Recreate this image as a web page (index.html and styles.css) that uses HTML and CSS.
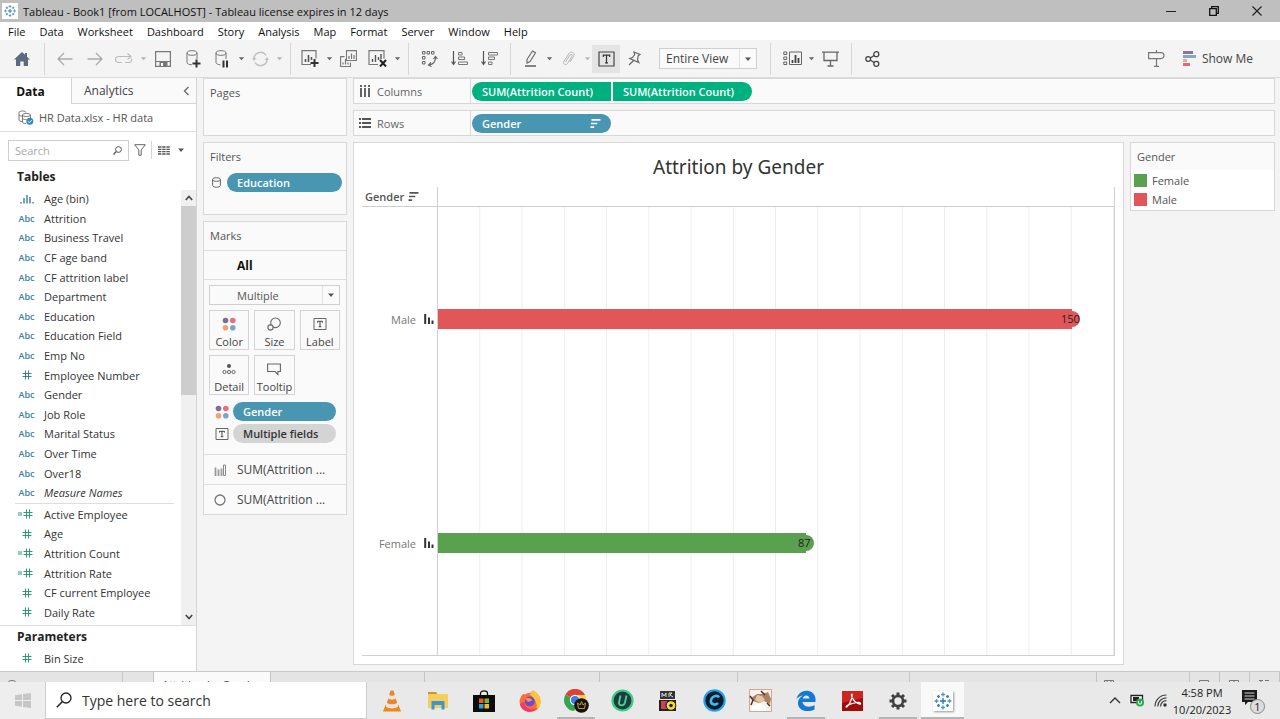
FILE: index.html
```html
<!DOCTYPE html>
<html lang="en">
<head>
<meta charset="utf-8">
<title>Tableau - Book1</title>
<link rel="stylesheet" href="styles.css">
</head>
<body>
<svg class="defs" aria-hidden="true">
  <defs>
    <symbol id="caret" viewBox="0 0 8 8"><path d="M1 2.500h6L4 6z" fill="currentColor"/></symbol>
    <symbol id="bins" viewBox="0 0 14 10"><path d="M1 8v1.500M4 4v5.500M7 1v8.500M10 3v6.500M13 8v1.500" stroke="#3b7f9f" stroke-width="1.400" fill="none"/></symbol>
    <symbol id="hash" viewBox="0 0 10 10"><path d="M3.500 .5v9M6.500 .5v9M.5 3.500h9M.5 6.500h9" stroke="#2f9a77" fill="none"/></symbol>
    <symbol id="calc" viewBox="0 0 15 10"><path d="M8.500 .5v9M11.500 .5v9M5.500 3.500h9M5.500 6.500h9M0 4h4M0 6h4" stroke="#2f9a77" fill="none"/></symbol>
    <symbol id="dots" viewBox="0 0 14 14"><circle cx="3.500" cy="3.500" r="2.800" fill="#7d6c99"/><circle cx="10.800" cy="3.500" r="2.800" fill="#ee6a7c"/><circle cx="3.500" cy="10.700" r="2.800" fill="#f2a177"/><circle cx="10.800" cy="10.700" r="2.800" fill="#7ba3c7"/></symbol>
    <symbol id="label-t" viewBox="0 0 14 14"><path d="M1 1.500h12v11H1z" fill="none" stroke="#666"/><path d="M4.500 5.500V4.300h5v1.200M7 4.300v5.400M5.700 9.700h2.600" fill="none" stroke="#444"/></symbol>
    <symbol id="sort" viewBox="0 0 12 10"><path d="M1.500 1h10M1 5h7M.5 9h4" stroke="currentColor" stroke-width="1.800" fill="none"/></symbol>
    <symbol id="marks" viewBox="0 0 10 11"><path d="M1.200 0v10M5 3.500V10M8.500 6.500V10" stroke="#333" stroke-width="2" fill="none"/></symbol>
    <symbol id="spark" viewBox="0 0 20 20"><g stroke-width="1.300" fill="none"><path d="M10 7v6M7 10h6" stroke="#2b6ea6"/><path d="M10 1.500v4M8 3.500h4M10 14.500v4M8 16.500h4M1.500 10h4M3.500 8v4M14.500 10h4M16.500 8v4" stroke="#4f94cb"/><path d="M5.500 4v3M4 5.500h3M14.500 4v3M13 5.500h3M5.500 13v3M4 14.500h3M14.500 13v3M13 14.500h3" stroke="#3b82bd"/></g></symbol>
  </defs>
</svg>

<header class="titlebar">
  <span class="app-icon"><svg width="14" height="14"><use href="#spark"/></svg></span>
  <h1 class="titlebar-text">Tableau - Book1 [from LOCALHOST] - Tableau license expires in 12 days</h1>
  <div class="window-controls">
    <button aria-label="Minimize"><svg width="10" height="10"><path d="M0 5.500h10" stroke="#222" fill="none"/></svg></button>
    <button aria-label="Restore"><svg width="10" height="10"><path d="M.7 2.700h6.600v6.600H.7zM2.700 2.700v-2h6.600v6.600h-2" stroke="#111" stroke-width="1.300" fill="none"/></svg></button>
    <button aria-label="Close"><svg width="10" height="10"><path d="M.5.5l9 9M9.500.5l-9 9" stroke="#222" stroke-width="1.200" fill="none"/></svg></button>
  </div>
</header>

<nav class="menubar">
  <button>File</button><button>Data</button><button>Worksheet</button><button>Dashboard</button><button>Story</button><button>Analysis</button><button>Map</button><button>Format</button><button>Server</button><button>Window</button><button>Help</button>
</nav>

<div class="toolbar">
  <div class="tool-group group-home">
    <button class="tool wide" aria-label="Start page"><svg width="16" height="14" viewBox="0 0 16 14"><path d="M8 0L0 7.500h2V14h4.300V9.500h3.400V14H14V7.500h2L13 4.700V1h-2v1.800z" fill="#5b6b80"/></svg></button>
  </div>
  <div class="tool-group">
    <button class="tool wide" aria-label="Undo"><svg width="16" height="14" viewBox="0 0 16 14"><path d="M15.500 7H1M7 1L1 7l6 6" stroke="#a9a9a9" stroke-width="1.300" fill="none"/></svg></button>
    <button class="tool wide" aria-label="Redo"><svg width="16" height="14" viewBox="0 0 16 14"><path d="M.5 7H15M9 1l6 6-6 6" stroke="#a9a9a9" stroke-width="1.300" fill="none"/></svg></button>
    <button class="tool" aria-label="Replay"><svg width="18" height="12" viewBox="0 0 18 12"><path d="M7 9.500H3.500a3 3 0 010-6h12M12.500.5l3.500 3-3.500 3M10 9.500h4.500a3 3 0 002-4" stroke="#bdbdbd" stroke-width="1.200" fill="none"/></svg></button>
    <button class="tool-caret faded" aria-label="Replay options"><svg width="7" height="7"><use href="#caret"/></svg></button>
    <button class="tool wide" aria-label="Save"><svg width="16" height="16" viewBox="0 0 16 16"><path d="M.6.6h14.800v14.800H.6zM1 10.500h14" stroke="#777" stroke-width="1.200" fill="none"/><path d="M4.500 10.500h8V15h-8z" fill="#777"/><path d="M6 12h2v3H6z" fill="#fff"/></svg></button>
    <button class="tool wide" aria-label="New data source"><svg width="15" height="18" viewBox="0 0 15 18"><ellipse cx="6" cy="3" rx="5" ry="2.300" stroke="#777" fill="none"/><path d="M1 3v9.500c0 1.300 2.300 2.300 5 2.300M11 3v6" stroke="#777" fill="none"/><path d="M10.500 9.500v8M6.500 13.500h8" stroke="#333" stroke-width="2" fill="none"/></svg></button>
    <button class="tool" aria-label="Pause updates"><svg width="14" height="18" viewBox="0 0 14 18"><ellipse cx="6" cy="3" rx="5" ry="2.300" stroke="#777" fill="none"/><path d="M1 3v9.500c0 1.300 2.300 2.300 4.500 2.300M11 3v6" stroke="#777" fill="none"/><path d="M8.500 10.500v7M12 10.500v7" stroke="#333" stroke-width="2" fill="none"/></svg></button>
    <button class="tool-caret" aria-label="Update options"><svg width="7" height="7"><use href="#caret"/></svg></button>
    <button class="tool" aria-label="Run update"><svg width="17" height="16" viewBox="0 0 17 16"><path d="M2 8.500a6.500 6.500 0 0112-4M15 7.500a6.500 6.500 0 01-12 4" stroke="#c0c0c0" stroke-width="1.400" fill="none"/><path d="M0 7h4.500L2 10zM12.500 9H17l-2-3z" fill="#c0c0c0"/></svg></button>
    <button class="tool-caret faded" aria-label="Run options"><svg width="7" height="7"><use href="#caret"/></svg></button>
  </div>
  <div class="tool-group">
    <button class="tool" aria-label="New worksheet"><svg width="18" height="17" viewBox="0 0 18 17"><path d="M10 14.500H1V.6h14v8" stroke="#777" stroke-width="1.200" fill="none"/><path d="M4.500 12V9M7.500 12V5M10.500 10V7" stroke="#555" stroke-width="1.600" fill="none"/><path d="M13.500 9v8M9.500 13h8" stroke="#333" stroke-width="2" fill="none"/></svg></button>
    <button class="tool-caret" aria-label="New options"><svg width="7" height="7"><use href="#caret"/></svg></button>
    <button class="tool" aria-label="Duplicate"><svg width="17" height="17" viewBox="0 0 17 17"><path d="M6.500.6h9.900v9.900H6.500zM4.500 6.600H.6v9.900h9.900v-4" stroke="#777" stroke-width="1.100" fill="none"/><path d="M9 9V6M11.500 9V3.500M14 9V5M3 14.500v-2M5.500 14.500V9M8 14.500v-2" stroke="#777" stroke-width="1.200" fill="none"/></svg></button>
    <button class="tool wide" aria-label="Clear sheet"><svg width="19" height="17" viewBox="0 0 19 17"><path d="M10 14.500H1V.6h15v8" stroke="#777" stroke-width="1.200" fill="none"/><path d="M4.500 12V9M7.500 12V5M10.500 10V7M13 9V4" stroke="#555" stroke-width="1.400" fill="none"/><path d="M12 10l6 6.500M18 10l-6 6.500" stroke="#222" stroke-width="2" fill="none"/></svg></button>
    <button class="tool-caret" aria-label="Clear options"><svg width="7" height="7"><use href="#caret"/></svg></button>
  </div>
  <div class="tool-group">
    <button class="tool wide" aria-label="Swap rows and columns"><svg width="17" height="17" viewBox="0 0 17 17"><path d="M1.500 1.500h2.500v2.500H1.500zM6 1.500h2.500v2.500H6zM10.500 1.500H13v2.500h-2.500zM1.500 6.500h2.500V9H1.500zM1.500 11.500h2.500V14H1.500z" stroke="#666" fill="none"/><path d="M14.500 7.500c0 4-2 6.500-6 7.500M12.500 9l2-2.500 2 2.500M10 12.500L7.500 15l3 1.500" stroke="#666" stroke-width="1.200" fill="none"/></svg></button>
    <button class="tool wide" aria-label="Sort ascending"><svg width="17" height="15" viewBox="0 0 17 15"><path d="M2.500 0v13M.5 10.500l2 3 2-3" stroke="#555" stroke-width="1.200" fill="none"/><path d="M7.500 1.500h3.500V4H7.500zM7.500 6h6v2.500h-6zM7.500 11h9v2.500h-9z" stroke="#777" fill="none"/></svg></button>
    <button class="tool wide" aria-label="Sort descending"><svg width="17" height="15" viewBox="0 0 17 15"><path d="M2.500 0v13M.5 10.500l2 3 2-3" stroke="#555" stroke-width="1.200" fill="none"/><path d="M7.500 1.500h9V4h-9zM7.500 6h6v2.500h-6zM7.500 11h3.500v2.500H7.500z" stroke="#777" fill="none"/></svg></button>
  </div>
  <div class="tool-group group-format">
    <button class="tool" aria-label="Highlight"><svg width="13" height="17" viewBox="0 0 13 17"><path d="M3 9.500L8.500 1l3 1.800L6 11.500 3 13z" stroke="#666" stroke-width="1.100" fill="none"/><path d="M1 16h11" stroke="#777" stroke-width="1.800"/></svg></button>
    <button class="tool-caret" aria-label="Highlight options"><svg width="7" height="7"><use href="#caret"/></svg></button>
    <button class="tool" aria-label="Group members"><svg width="13" height="16" viewBox="0 0 13 16"><path d="M3.500 11L8 4c1-1.500 3-.5 2 1.200L5.500 12.500c-1.500 2.300-5 .5-3.700-2L7 2.500C9-.5 13.500 2 11.700 5L8 11" stroke="#b5b5b5" fill="none"/></svg></button>
    <button class="tool-caret faded" aria-label="Group options"><svg width="7" height="7"><use href="#caret"/></svg></button>
    <button class="tool pressed" aria-label="Show mark labels" aria-pressed="true"><svg width="17" height="16" viewBox="0 0 17 16"><path d="M1 1h15v14H1z" stroke="#444" stroke-width="1.200" fill="none"/><path d="M5.300 6V4.200h6.400V6M8.500 4.200v7.600M7 11.800h3" stroke="#333" stroke-width="1.200" fill="none"/></svg></button>
    <button class="tool" aria-label="Fix axes"><svg width="13" height="15" viewBox="0 0 13 15"><path d="M6 1l6 2.500-1.800 1.300-.7 4 1.300 2.700-9-4 2.700-1 2.200-3zM5.500 9.500L1 14" stroke="#666" stroke-width="1.200" fill="none"/></svg></button>
    <div class="select-wrap view-select">
      <select aria-label="Fit"><option>Entire View</option></select>
      <svg class="select-arrow" width="8" height="8"><use href="#caret"/></svg>
    </div>
  </div>
  <div class="tool-group group-cards">
    <button class="tool" aria-label="Show or hide cards"><svg width="19" height="15" viewBox="0 0 19 15"><path d="M6.500 1h12v12.500h-12zM.8 1h3v2.500h-3zM.8 6h3v2.500h-3zM.8 11h3v2.500h-3z" stroke="#666" fill="none"/><path d="M9.500 12V9M12.500 12V4M15.500 12V7" stroke="#444" stroke-width="1.800" fill="none"/></svg></button>
    <button class="tool-caret" aria-label="Card options"><svg width="7" height="7"><use href="#caret"/></svg></button>
    <button class="tool" aria-label="Presentation mode"><svg width="17" height="16" viewBox="0 0 17 16"><path d="M0 1.200h17M2 1.200v8.300h13V1.200M8.500 9.500V15M5.500 15h6" stroke="#666" stroke-width="1.300" fill="none"/></svg></button>
  </div>
  <button class="tool wide share" aria-label="Share"><svg width="15" height="16" viewBox="0 0 15 16"><g stroke="#444" stroke-width="1.300" fill="none"><circle cx="3.200" cy="8" r="2.400"/><circle cx="11.300" cy="3.200" r="2.500"/><circle cx="11.300" cy="12.800" r="2.500"/><path d="M5.300 7L9 4.500M5.300 9L9 11.500"/></g></svg></button>
  <div class="toolbar-end">
    <button class="tool" aria-label="Guide"><svg width="17" height="17" viewBox="0 0 17 17"><path d="M.6 2.600h12.400c4 0 4 6 0 6H.6zM8.500 0v2.600M8.500 8.600V16M6 16.300h5" stroke="#777" stroke-width="1.200" fill="none"/></svg></button>
    <button class="show-me"><svg width="13" height="15" viewBox="0 0 13 15"><path d="M0 0h10v3H0z" fill="#8b7497"/><path d="M0 4h13v3H0z" fill="#85a7c9"/><path d="M0 8h4v3H0z" fill="#f2a988"/><path d="M0 12h7v3H0z" fill="#ea6576"/></svg>Show Me</button>
  </div>
</div>

<main class="workspace">
  <aside class="sidebar">
    <div class="side-tabs">
      <button class="side-tab active">Data</button>
      <button class="side-tab">Analytics</button>
      <button class="collapse" aria-label="Collapse pane"><svg width="6" height="10"><path d="M5.500 1L1.500 5l4 4" stroke="#666" stroke-width="1.300" fill="none"/></svg></button>
    </div>
    <div class="source">
      <svg width="16" height="15" viewBox="0 0 16 15"><path d="M1 2.500C1 .5 8 .5 8 2.500M1 2.500v7.500c0 1 1.500 1.500 3 1.500M1 5c1 1 2 1 3 1M4.500 5c0-2 8-2 8 0s-8 2-8 0v7c0 1 1.500 1.500 3.500 1.500M12.500 5v3M4.500 8.500c1 1 3 1 4 1" stroke="#777" fill="none"/><circle cx="11.800" cy="11.300" r="3.500" fill="#3a86b4"/><path d="M10 11.300l1.300 1.400 2.300-2.500" stroke="#fff" fill="none"/></svg>
      <span>HR Data.xlsx - HR data</span>
    </div>
    <div class="search-row">
      <label class="search-box">
        <input type="text" placeholder="Search" aria-label="Search fields">
        <svg width="9" height="9"><circle cx="5.500" cy="3.500" r="2.900" stroke="#555" fill="none"/><path d="M3.300 5.500L.5 8.500" stroke="#555" stroke-width="1.300"/></svg>
      </label>
      <button class="filter-button" aria-label="Filter"><svg width="12" height="12"><path d="M.7.7h10.600L7.200 6v5.200H4.800V6z" stroke="#666" fill="none"/></svg></button>
      <button class="view-button" aria-label="View options"><svg width="12" height="9"><path d="M0 1h12M0 3.300h12M0 5.600h12M0 8h12" stroke="#555" stroke-width="1.300" stroke-dasharray="3.400 .8"/></svg><svg width="8" height="8"><use href="#caret"/></svg></button>
    </div>
    <h2 class="side-heading">Tables</h2>
    <div class="field-area">
      <ul class="fields">
        <li><svg class="type" width="14" height="10"><use href="#bins"/></svg>Age (bin)</li>
        <li><span class="type abc">Abc</span>Attrition</li>
        <li><span class="type abc">Abc</span>Business Travel</li>
        <li><span class="type abc">Abc</span>CF age band</li>
        <li><span class="type abc">Abc</span>CF attrition label</li>
        <li><span class="type abc">Abc</span>Department</li>
        <li><span class="type abc">Abc</span>Education</li>
        <li><span class="type abc">Abc</span>Education Field</li>
        <li><span class="type abc">Abc</span>Emp No</li>
        <li><svg class="type" width="10" height="10" viewBox="0 0 10 10"><path d="M3.500 .5v9M6.500 .5v9M.5 3.500h9M.5 6.500h9" stroke="#3b7f9f" fill="none"/></svg>Employee Number</li>
        <li><span class="type abc">Abc</span>Gender</li>
        <li><span class="type abc">Abc</span>Job Role</li>
        <li><span class="type abc">Abc</span>Marital Status</li>
        <li><span class="type abc">Abc</span>Over Time</li>
        <li><span class="type abc">Abc</span>Over18</li>
        <li><span class="type abc">Abc</span><em>Measure Names</em></li>
        <li class="divider"></li>
        <li><svg class="type calc" width="15" height="10"><use href="#calc"/></svg>Active Employee</li>
        <li><svg class="type" width="10" height="10"><use href="#hash"/></svg>Age</li>
        <li><svg class="type calc" width="15" height="10"><use href="#calc"/></svg>Attrition Count</li>
        <li><svg class="type calc" width="15" height="10"><use href="#calc"/></svg>Attrition Rate</li>
        <li><svg class="type" width="10" height="10"><use href="#hash"/></svg>CF current Employee</li>
        <li><svg class="type" width="10" height="10"><use href="#hash"/></svg>Daily Rate</li>
      </ul>
      <div class="scrollbar">
        <button aria-label="Scroll up"><svg width="8" height="6"><path d="M.8 5L4 1.500 7.200 5" stroke="#444" stroke-width="1.600" fill="none"/></svg></button>
        <div class="scroll-track"><div class="scroll-thumb"></div></div>
        <button aria-label="Scroll down"><svg width="8" height="6"><path d="M.8 1L4 4.500 7.200 1" stroke="#444" stroke-width="1.600" fill="none"/></svg></button>
      </div>
    </div>
    <div class="parameters">
      <h2 class="side-heading">Parameters</h2>
      <ul class="fields"><li><svg class="type" width="10" height="10"><use href="#hash"/></svg>Bin Size</li></ul>
    </div>
  </aside>

  <section class="cards">
    <div class="card pages"><h3>Pages</h3></div>
    <div class="card filters">
      <h3>Filters</h3>
      <div class="pill-row"><svg width="9" height="11"><path d="M.6 2.500v6c0 2.300 7.800 2.300 7.800 0v-6c0-2.400-7.800-2.400-7.800 0s7.800 2.400 7.800 0" stroke="#666" fill="none"/></svg><button class="pill blue-pill">Education</button></div>
    </div>
    <div class="card marks-card">
      <h3>Marks</h3>
      <button class="marks-all">All</button>
      <div class="marks-body">
        <div class="select-wrap mark-type">
          <select aria-label="Mark type"><option>Multiple</option></select>
          <svg class="select-arrow" width="8" height="8"><use href="#caret"/></svg>
        </div>
        <div class="mark-buttons">
          <button><svg width="14" height="14"><use href="#dots"/></svg>Color</button>
          <button><svg width="14" height="14"><circle cx="8.500" cy="5.800" r="4.800" stroke="#666" stroke-width="1.100" fill="none"/><circle cx="3.500" cy="10.500" r="2.600" stroke="#666" stroke-width="1.100" fill="#fafafa"/></svg>Size</button>
          <button><svg width="14" height="14"><use href="#label-t"/></svg>Label</button>
          <button><svg width="14" height="14"><circle cx="7" cy="4" r="2" fill="#555"/><g stroke="#666" fill="none"><circle cx="2.500" cy="10" r="1.600"/><circle cx="7" cy="10" r="1.600"/><circle cx="11.500" cy="10" r="1.600"/></g></svg>Detail</button>
          <button><svg width="14" height="14"><path d="M.6 2h12.800v7.500h-2.500v3L8 9.500H.6z" stroke="#666" stroke-width="1.100" fill="none"/></svg>Tooltip</button>
        </div>
        <div class="mark-pill"><svg width="14" height="14"><use href="#dots"/></svg><button class="pill blue-pill">Gender</button></div>
        <div class="mark-pill"><svg width="14" height="14"><use href="#label-t"/></svg><button class="pill gray-pill">Multiple fields</button></div>
      </div>
      <button class="marks-sum"><svg width="12" height="12"><path d="M1.500 3.500V12M4.500 5.500V12M7.500 4.500V12" stroke="#999" stroke-width="1.800"/><path d="M9.500 1h2v10.500h-2z" stroke="#888" fill="none"/></svg>SUM(Attrition ...</button>
      <button class="marks-sum"><svg width="12" height="12"><circle cx="6" cy="6" r="5" stroke="#777" stroke-width="1.300" fill="none"/></svg>SUM(Attrition ...</button>
    </div>
  </section>

  <section class="content">
    <div class="shelf">
      <div class="shelf-name"><svg width="12" height="12"><path d="M2 0v2M6 0v2M10 0v2M2 3v9M6 3v9M10 3v9" stroke="#555" stroke-width="1.800"/></svg>Columns</div>
      <button class="pill green-pill pill-left">SUM(Attrition Count)</button><button class="pill green-pill pill-right">SUM(Attrition Count)</button>
    </div>
    <div class="shelf">
      <div class="shelf-name"><svg width="12" height="12"><path d="M0 2h2M0 6h2M0 10h2M3 2h9M3 6h9M3 10h9" stroke="#555" stroke-width="1.800"/></svg>Rows</div>
      <button class="pill blue-pill pill-sorted">Gender<svg width="11" height="9"><use href="#sort"/></svg></button>
    </div>
    <div class="view-row">
      <div class="view">
        <h2 class="view-title">Attrition by Gender</h2>
        <div class="chart">
          <div class="chart-corner">Gender<svg width="11" height="9"><use href="#sort"/></svg></div>
          <div class="chart-top"></div>
          <div class="row-label">Male<svg width="10" height="11"><use href="#marks"/></svg></div>
          <div class="plot"><div class="bar red" style="width:93.75%"><span class="bar-value">150</span></div></div>
          <div class="row-label">Female<svg width="10" height="11"><use href="#marks"/></svg></div>
          <div class="plot"><div class="bar green" style="width:54.375%"><span class="bar-value">87</span></div></div>
        </div>
      </div>
      <div class="legend">
        <h3>Gender</h3>
        <ul><li><span class="swatch green"></span>Female</li><li><span class="swatch red"></span>Male</li></ul>
      </div>
    </div>
  </section>
</main>

<div class="sheet-tabs">
  <button class="sheet data-source" aria-label="Data source"><svg width="8" height="10"><path d="M.5 3v5c0 2 7 2 7 0V3c0-2-7-2-7 0" stroke="#777" fill="none"/></svg></button>
  <button class="sheet narrow" aria-label="Previous sheets"></button>
  <button class="sheet current">Attrition by Gender</button>
  <button class="sheet s1" aria-label="Sheet 2"></button><button class="sheet s2" aria-label="Sheet 3"></button><button class="sheet s3" aria-label="Sheet 4"></button><button class="sheet s4" aria-label="Sheet 5"></button>
  <div class="sheet-tools">
    <button aria-label="New sheet"><svg width="10" height="10"><path d="M.5 1.500h9v8h-9zM3 1.500v8M7 1.500v8" stroke="#777" fill="none"/></svg></button>
    <button aria-label="Sheet sorter"><svg width="10" height="10"><path d="M.5 1.500h9v8h-9z" stroke="#777" fill="none"/></svg></button>
    <button aria-label="Filmstrip"><svg width="10" height="10"><path d="M.5 1.500h9v8h-9zM5 1.500v8" stroke="#777" fill="none"/></svg></button>
    <button aria-label="Tabs"><svg width="10" height="10"><path d="M0 1.500h4M6 1.500h4M2 1.500v8" stroke="#777" fill="none"/></svg></button>
  </div>
</div>

<footer class="taskbar">
  <button class="start" aria-label="Start"><svg width="16" height="15" viewBox="0 0 16 15"><path d="M0 2.200L7 1.200V7H0zM8 1l8-1v7H8zM0 8h7v5.800l-7-1zM8 8h8v7l-8-1z" fill="#c6c6c6"/></svg></button>
  <label class="task-search">
    <svg width="16" height="16"><circle cx="10" cy="6" r="5" stroke="#222" stroke-width="1.300" fill="none"/><path d="M6.500 9.500L.8 15.200" stroke="#222" stroke-width="1.500"/></svg>
    <input type="text" placeholder="Type here to search" aria-label="Type here to search">
  </label>
  <div class="apps">
    <button aria-label="VLC"><svg width="20" height="22" viewBox="0 0 20 22"><path d="M3.500 15h13l2.500 6.500H1z" fill="#ef8712"/><path d="M8.500.5h3l4.700 16c-2.500 2.500-9.900 2.500-12.400 0z" fill="#e4e4e4"/><path d="M8.500.5h3l1.300 4.500c-1.500 1-4.100 1-5.600 0zM6.200 8.500c2 1.500 5.600 1.500 7.600 0l1.300 4.500c-3 1.800-7.200 1.800-10.200 0z" fill="#e9862a"/></svg></button>
    <button aria-label="File Explorer"><svg width="20" height="19" viewBox="0 0 20 19"><path d="M0 1h8l2 2h10v14H0z" fill="#f7ce5b"/><path d="M0 1h8l1 2H0z" fill="#c89527"/><path d="M3.500 10h13v8.500h-3V14h-7v4.500h-3z" fill="#3c96d3"/></svg></button>
    <button aria-label="Microsoft Store"><svg width="22" height="22" viewBox="0 0 22 22"><path d="M0 5h22v17H0z" fill="#0b0b0b"/><path d="M7.500 7V3.500C7.500 0 14.500 0 14.500 3.500V7" stroke="#111" stroke-width="1.300" fill="none"/><path d="M6 8.500h4.500V13H6z" fill="#f15a24"/><path d="M11.500 8.500H16V13h-4.500z" fill="#7cb829"/><path d="M6 14h4.500v4.500H6z" fill="#28a5e0"/><path d="M11.500 14H16v4.500h-4.500z" fill="#fbbc1a"/></svg></button>
    <button aria-label="Firefox"><svg width="22" height="22" viewBox="0 0 22 22"><path d="M4 4l2 .5C7 3.500 9 2.800 11 3l3-2.500C19 3 21.500 7 21.500 12a10.500 10 0 01-21 0C.5 9 2 6 4 4z" fill="#ff6b35"/><path d="M14 .5c5 2.500 7.500 6 7.500 11.500 0 3-1.500 6-4 8 1.500-6-2-13-7-15.500z" fill="#ffc53a"/><path d="M1 14c1 5 5 7.800 10 7.800 3 0 6-1.300 8-3.800-6 3-13 1-14-6z" fill="#f23a66"/><circle cx="10.800" cy="11.500" r="5" fill="#6b4bd6"/><path d="M6 8.500c4-1.500 7 0 7 2l-4 1.500z" fill="#ff9640"/></svg></button>
    <button class="running" aria-label="Chrome"><svg width="25" height="24" viewBox="0 0 25 24"><path d="M11 11L1.500 5.500A11 11 0 0121 6z" fill="#df4137"/><path d="M11 11l-9.500-5.500A11 11 0 0010 22l4-7z" fill="#35a453"/><path d="M11 6h10a11 11 0 01-10 16l5-9z" fill="#f9cf3d"/><circle cx="11" cy="11" r="5.200" fill="#fff"/><circle cx="11" cy="11" r="4.100" fill="#3e7de6"/><circle cx="17.500" cy="16.500" r="7.300" fill="#15130c"/><path d="M14.500 19.500l-1-5.500 2.500 2 1.500-3.500L19 16l2.500-2-1 5.500z" fill="none" stroke="#b79a36"/></svg></button>
    <button aria-label="IObit Uninstaller"><svg width="23" height="23" viewBox="0 0 23 23"><circle cx="11.500" cy="11.500" r="10" fill="#243a40" stroke="#35cf85" stroke-width="2.200"/><path d="M9.500 6.500l-1.500 7c-.5 3.800 5 3.800 6 0l1.500-7" stroke="#3bdc91" stroke-width="1.800" fill="none"/></svg></button>
    <button aria-label="Media Player Classic"><svg width="20" height="22" viewBox="0 0 20 22"><path d="M2 1h15v8H2z" fill="#333"/><path d="M4 7V3l2 3 2-3v4M11 7V3h3L12 5l3 2" stroke="#ddd" fill="none"/><path d="M1 10h17v11H1z" fill="#222"/><path d="M3 11h6v8H3z" fill="#e33b3b"/><path d="M7 12h4v6H7z" fill="#3c4dd1"/><circle cx="13" cy="15.500" r="4.800" fill="#f5dc2f" stroke="#222"/><circle cx="13" cy="15.500" r="1.800" fill="#222"/></svg></button>
    <button aria-label="CCleaner"><svg width="23" height="23" viewBox="0 0 23 23"><circle cx="11.500" cy="11.500" r="10.200" fill="#0c1a2a" stroke="#1ba7ec" stroke-width="2"/><path d="M16 8.500c-1.500-3-7-1.500-8 2.500-1 4.500 4.500 6 7 3" stroke="#38bdf5" stroke-width="2.600" fill="none"/></svg></button>
    <button aria-label="Game"><svg width="23" height="23" viewBox="0 0 23 23"><path d="M.5.500h22v22H.5z" fill="#f7f2ed" stroke="#e0a090"/><path d="M2 9l6-4 6 0 5-2 3 7-1 5-6-3-5 2-6-2z" fill="#a78264"/><path d="M8 6l5 1 3 4-5 3-5-3z" fill="#e4c4a5"/><path d="M1 7l3 4-2 5M12 2l4 4M18 14l3 3" stroke="#4a3128" stroke-width="1.500" fill="none"/><path d="M3 18l8-4 6 4v4H3z" fill="#fff"/></svg></button>
    <button class="running" aria-label="Edge"><svg width="20" height="21" viewBox="0 0 20 21"><path d="M.5 9.500C2-2 18.500-2 19.500 8.500V12H6.500c.5 5 7.500 6 12 3v4.500C10 23.500 1.500 20 2 12.500c.2-3 2-5.500 5-7-3.500.5-5.500 2-6.500 4zM6.800 8.500h6.700C13 4.500 7.500 4.500 6.800 8.500z" fill="#1479d6"/></svg></button>
    <button aria-label="Acrobat"><svg width="21" height="20" viewBox="0 0 21 20"><path d="M0 0h21v20H0z" fill="#9c0d0b"/><path d="M0 0h21v7L0 12z" fill="#cc2620"/><path d="M10 3c-2 0 1 8 7 10 3 .5 1.500-2-2-1.500-5 .5-11 3-11 4.500 1 1.500 7-8 6-13z" stroke="#fff" stroke-width="1.200" fill="none"/></svg></button>
    <button class="running" aria-label="Settings"><svg width="18" height="18" viewBox="0 0 18 18"><circle cx="9" cy="9" r="5" stroke="#3f3f3f" stroke-width="2.600" fill="none"/><g stroke="#3f3f3f" stroke-width="3"><path d="M9 .5v3M9 14.500v3M.5 9h3M14.500 9h3M3 3l2 2M13 13l2 2M3 15l2-2M13 5l2-2"/></g></svg></button>
    <button class="running active-app" aria-label="Tableau"><span class="tableau-tile"><svg width="20" height="20"><use href="#spark"/></svg></span></button>
  </div>
  <div class="tray">
    <button class="tray-button" aria-label="Hidden icons"><svg width="12" height="7"><path d="M1 6l5-5 5 5" stroke="#333" stroke-width="1.400" fill="none"/></svg></button>
    <button class="tray-button" aria-label="Battery"><svg width="15" height="13" viewBox="0 0 15 13"><path d="M1 1.500h11.500v7H1z" stroke="#222" stroke-width="1.300" fill="#fff"/><path d="M3 3h6v4H3z" fill="#222"/><circle cx="10" cy="8.500" r="4" fill="#2fa84c"/><path d="M8.500 7v2c0 1.500 3 1.500 3 0V7" stroke="#fff" fill="none"/></svg></button>
    <button class="tray-button" aria-label="Wi-Fi"><svg width="13" height="13" viewBox="0 0 13 13"><g stroke="#444" stroke-width="1.200" fill="none"><path d="M1 12.500C1 6 6 1 12.500 1M3.800 12.500c0-5 4-8.700 8.700-8.700M6.600 12.500c0-3.500 2.500-5.900 5.900-5.900"/></g><circle cx="11" cy="11" r="1.700" fill="#333"/></svg></button>
    <div class="clock"><span>4:58 PM</span><span>10/20/2023</span></div>
    <button class="notifications" aria-label="1 notification"><svg width="23" height="23" viewBox="0 0 23 23"><path d="M1 1h15v12H7l-3 3v-3H1z" fill="#1b1b1b"/><path d="M3.500 4h10M3.500 7h10M3.500 10h10" stroke="#d5d5d5"/></svg><span class="badge">1</span></button>
  </div>
</footer>
</body>
</html>
```
FILE: styles.css
```css
* { box-sizing: border-box; }

body {
  margin: 0;
  height: 100vh;
  display: flex;
  flex-direction: column;
  overflow: hidden;
  background: #f4f4f4;
  color: #444;
  font-family: "Open Sans", "Noto Sans", sans-serif;
  font-size: 12px;
}

button, input, select {
  font: inherit;
  color: inherit;
  border: 0;
  margin: 0;
  padding: 0;
  background: none;
  border-radius: 0;
}

h1, h2, h3, ul { margin: 0; padding: 0; font: inherit; list-style: none; }
svg { display: block; flex: none; }
.defs { position: absolute; width: 0; height: 0; }

/* Window title and menus */
.titlebar {
  display: flex;
  align-items: center;
  flex: none;
  height: 22px;
  gap: 5px;
  padding: 0 2px;
  background: #bfbfbf;
  color: #111;
}
.app-icon { background: #fff; padding: 1px; }
.titlebar-text { flex: 1; font-size: 11px; }
.window-controls { display: flex; height: 20px; }
.window-controls button { width: 43px; display: grid; place-items: center; }

.menubar {
  display: flex;
  flex: none;
  height: 18px;
  padding-left: 8px;
  gap: 14px;
  background: #fff;
  color: #111;
  font-size: 11px;
}

/* Toolbar */
.toolbar {
  display: flex;
  align-items: center;
  flex: none;
  height: 38px;
  border-bottom: 1px solid #dcdcdc;
}
.tool-group {
  display: flex;
  align-items: center;
  height: 32px;
  padding: 0 6px 0 5px;
  border-right: 1px solid #d6d6d6;
}
.group-home { padding: 0 7px; }
.group-format { padding-right: 13px; }
.group-cards { padding: 0 7px; }
.tool { width: 28px; height: 28px; display: grid; place-items: center; }
.tool.wide { width: 30px; }
.tool.pressed { background: #e4e4e4; }
.tool-caret { width: 10px; height: 28px; display: grid; place-items: center; color: #666; }
.tool-caret.faded { color: #b5b5b5; }
.share { margin-left: 5px; }
.toolbar-end { display: flex; align-items: center; margin-left: auto; gap: 12px; padding-right: 27px; }
.show-me { display: flex; align-items: center; gap: 6px; font-size: 12px; }

.select-wrap { position: relative; background: #fafafa; border: 1px solid #cfcfcf; }
.select-wrap select { width: 100%; height: 100%; appearance: none; }
.select-arrow { position: absolute; right: 4px; top: 50%; margin-top: -4px; pointer-events: none; color: #555; }
.view-select { width: 98px; height: 21px; margin-left: 11px; }
.view-select select { padding-left: 6px; }
.view-select::after, .mark-type::after { content: ""; position: absolute; right: 16px; top: 0; bottom: 0; border-left: 1px solid #e2e2e2; }

/* Main area */
.workspace { flex: 1; min-height: 0; display: flex; gap: 6px; padding-right: 5px; }

.sidebar {
  width: 197px;
  flex: none;
  display: flex;
  flex-direction: column;
  background: #fff;
  border-right: 1px solid #d4d4d4;
}
.side-tabs { display: flex; height: 26px; }
.side-tab { padding: 0 12px; background: #fafafa; border-bottom: 1px solid #d4d4d4; }
.side-tab.active { width: 72px; padding: 0 10px 0 0; background: #fff; border: 0; border-right: 1px solid #d4d4d4; font-weight: 700; color: #111; }
.collapse { flex: 1; display: flex; align-items: center; justify-content: flex-end; padding-right: 7px; background: #fafafa; border-bottom: 1px solid #d4d4d4; }
.source { display: flex; align-items: center; gap: 5px; height: 28px; padding-left: 18px; border-bottom: 1px solid #dedede; font-size: 11px; color: #555; }
.search-row { display: flex; align-items: center; height: 36px; padding-left: 8px; }
.search-box { display: flex; align-items: center; width: 121px; height: 21px; padding: 0 6px; border: 1px solid #cfcfcf; }
.search-box input { flex: 1; min-width: 0; font-size: 11px; outline: 0; }
.search-box input::placeholder { color: #aaa; opacity: 1; }
.filter-button { width: 22px; display: grid; place-items: center; }
.view-button { display: flex; align-items: center; gap: 7px; height: 18px; padding-left: 6px; border-left: 1px solid #d4d4d4; color: #555; }
.side-heading { padding-left: 17px; font-size: 12px; line-height: 18px; font-weight: 700; color: #222; }
.field-area { flex: 1; min-height: 0; display: flex; }
.fields { flex: 1; display: flex; flex-direction: column; padding: 3px 0; font-size: 11px; color: #333; }
.fields li { flex: 1; display: grid; grid-template-columns: 17px 1fr; column-gap: 9px; align-items: center; min-height: 0; padding-left: 18px; }
.type { justify-self: center; }
.type.calc { justify-self: start; }
.abc { font-size: 9px; font-weight: 600; color: #3b7f9f; }
.fields .divider { flex: none; height: 2px; margin: 0 7px 0 15px; border-top: 1px solid #dedede; }
.scrollbar { width: 15px; display: flex; flex-direction: column; background: #f0f0f0; margin-top: 4px; }
.scrollbar button { height: 16px; display: grid; place-items: center; }
.scroll-track { flex: 1; }
.scroll-thumb { height: 47%; background: #cdcdcd; }
.parameters { border-top: 1px solid #dedede; padding: 2px 0 1px; }
.parameters .fields { padding: 2px 0; }
.parameters .fields li { height: 20px; flex: none; }

.cards { width: 144px; flex: none; display: flex; flex-direction: column; gap: 6px; }
.card { background: #fafafa; border: 1px solid #d8d8d8; font-size: 11px; color: #555; }
.card h3 { padding: 0 6px; line-height: 28px; }
.pages { height: 58px; }
.filters { height: 73px; }
.pill-row { display: flex; align-items: center; gap: 6px; padding: 2px 4px 0 8px; }
.pill { flex: 1; height: 19px; padding: 0 10px; border-radius: 10px; font-size: 11px; font-weight: 600; text-align: left; color: #fff; }
.blue-pill { background: #4996b2; }
.green-pill { background: #00b180; }
.gray-pill { background: #d4d4d4; color: #333; }
.marks-card { display: flex; flex-direction: column; }
.marks-all { height: 30px; padding-left: 33px; border-top: 1px solid #dedede; border-bottom: 1px solid #dedede; text-align: left; font-size: 12px; font-weight: 700; color: #111; }
.marks-body { padding: 5px 6px 8px 5px; }
.mark-type { height: 20px; }
.mark-type select { padding-left: 27px; }
.mark-buttons { display: grid; grid-template-columns: 1fr 1fr 1fr; gap: 5px; padding: 5px 0 7px; color: #444; }
.mark-buttons button { height: 40px; display: flex; flex-direction: column; align-items: center; gap: 3px; padding-top: 6px; border: 1px solid #d4d4d4; line-height: 15px; }
.mark-pill { display: flex; align-items: center; gap: 4px; padding: 0 4px 3px 6px; }
.marks-sum { display: flex; align-items: center; gap: 11px; height: 30px; padding-left: 10px; border-top: 1px solid #dedede; font-size: 12px; color: #444; }

/* Shelves */
.content { flex: 1; min-width: 0; display: flex; flex-direction: column; gap: 6px; }
.shelf { display: flex; align-items: center; height: 26px; background: #fafafa; border: 1px solid #d8d8d8; font-size: 11px; color: #666; }
.shelf-name { display: flex; align-items: center; gap: 6px; width: 117px; height: 100%; padding-left: 5px; margin-right: 1px; border-right: 1px solid #d8d8d8; }
.shelf .pill { flex: none; width: 139px; }
.shelf .pill-left { border-radius: 10px 0 0 10px; margin-right: 2px; }
.shelf .pill-right { border-radius: 0 10px 10px 0; }
.pill-sorted { display: flex; align-items: center; justify-content: space-between; }

/* Worksheet */
.view-row { flex: 1; min-height: 0; display: flex; align-items: flex-start; gap: 6px; padding-bottom: 6px; }
.view { flex: 1; align-self: stretch; display: flex; flex-direction: column; padding: 9px 8px 8px; background: #fff; border: 1px solid #d8d8d8; }
.view-title { font-family: "Noto Sans", sans-serif; font-size: 19px; line-height: 30px; text-align: center; color: #333; padding-bottom: 5px; }
.chart { flex: 1; display: grid; grid-template-columns: 75px 1fr; grid-template-rows: 20px 1fr 1fr; border-bottom: 1px solid #cfcfcf; border-right: 1px solid #cfcfcf; font-size: 11px; }
.chart-corner { display: flex; align-items: center; gap: 4px; padding-left: 3px; border-bottom: 1px solid #cfcfcf; font-weight: 600; color: #555; }
.chart-top { border-left: 1px solid #cfcfcf; border-bottom: 1px solid #cfcfcf; }
.row-label { display: flex; align-items: center; justify-content: flex-end; gap: 8px; padding-right: 3px; color: #777; }
.plot {
  display: flex;
  align-items: center;
  border-left: 1px solid #cfcfcf;
  background-image: linear-gradient(to left, #ededed 1px, transparent 1px);
  background-size: 6.25% 100%;
}
.bar { position: relative; height: 20px; }
.bar::after { content: ""; position: absolute; right: -8px; top: 2px; width: 16px; height: 16px; border-radius: 50%; background: inherit; }
.bar-value { position: absolute; right: -8px; top: 0; z-index: 1; line-height: 20px; color: #222; }
.green .bar-value { right: -5px; }
.red { background: #e15759; }
.green { background: #59a14f; }

.legend { width: 145px; background: #fff; border: 1px solid #d8d8d8; font-size: 11px; color: #555; }
.legend h3 { padding-left: 6px; line-height: 27px; background: #fafafa; }
.legend ul { padding: 1px 3px 1px; }
.legend li { display: flex; align-items: center; gap: 5px; line-height: 19px; height: 19px; }
.swatch { width: 13px; height: 13px; }

/* Sheet tabs, partly behind the taskbar */
.sheet-tabs { flex: none; display: flex; height: 11px; overflow: hidden; background: #e4e4e4; border-top: 1px solid #c9c9c9; }
.sheet { flex: none; display: flex; align-items: center; height: 24px; padding: 0 8px; border-right: 1px solid #c4c4c4; }
.data-source { width: 123px; }
.narrow { width: 31px; }
.current { width: 117px; background: #fafafa; font-size: 11px; }
.s1 { width: 154px; }
.s2 { width: 175px; }
.s3 { width: 138px; }
.s4 { width: 172px; }
.sheet-tools { margin-left: auto; display: flex; height: 24px; border-left: 1px solid #c4c4c4; }
.sheet-tools button { width: 30px; display: flex; align-items: center; padding: 0 9px; border-right: 1px solid #c4c4c4; }
.sheet-tools button:first-child { width: 93px; padding-left: 7px; }

/* Taskbar */
.taskbar { flex: none; display: flex; height: 37px; background: #e9e9e9; color: #222; }
.start { width: 45px; display: grid; place-items: center; background: #eee; }
.task-search { display: flex; align-items: center; gap: 10px; width: 322px; padding-left: 10px; background: #fff; border: 1px solid #ccc; border-top: 0; }
.task-search input { flex: 1; font-size: 14px; outline: 0; }
.task-search input::placeholder { color: #333; opacity: 1; }
.apps { display: flex; margin-left: 2px; }
.apps button { width: 46px; display: grid; place-items: center; }
.apps .running { background: linear-gradient(#b5b5b5, #b5b5b5) center bottom / 38px 2px no-repeat; }
.apps .active-app { width: 43px; background-color: #f9f9f9; background-size: 100% 2px; }
.tableau-tile { background: #fff; box-shadow: 1px 1px 2px #999; }
.tray { margin-left: auto; display: flex; align-items: center; padding-right: 16px; }
.tray-button { width: 23px; height: 37px; display: grid; place-items: center; }
.clock { width: 60px; display: flex; flex-direction: column; align-items: center; font-size: 11px; line-height: 17px; white-space: nowrap; }
.notifications { position: relative; margin-left: 9px; }
.badge { position: absolute; right: -1px; bottom: -2px; width: 15px; height: 15px; border: 1px solid #888; border-radius: 50%; background: #ddd; font-size: 11px; line-height: 13px; text-align: center; }
```
